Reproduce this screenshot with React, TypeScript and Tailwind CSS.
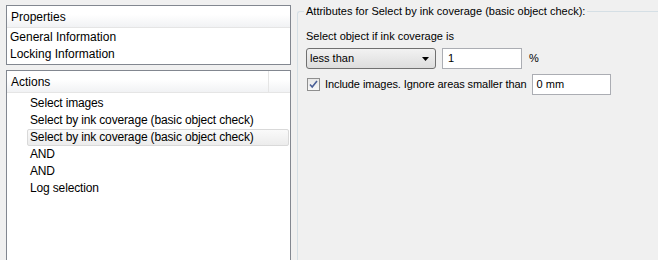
import React from "react";

const font = { fontFamily: '"Liberation Sans", Arial, sans-serif' };

function PanelHeader({ title, sep }: { title: string; sep?: boolean }) {
  return (
    <div className="relative h-[22px] flex items-center pl-[4px] bg-gradient-to-b from-white from-40% to-[#f1f2f4] border-b border-[#e5e5e5] text-[12px] text-black">
      {title}
      {sep && <div className="absolute left-[261px] top-0 h-full w-px bg-[#e5e5e5]" />}
    </div>
  );
}

export default function App() {
  const actions = [
    "Select images",
    "Select by ink coverage (basic object check)",
    "Select by ink coverage (basic object check)",
    "AND",
    "AND",
    "Log selection",
  ];
  return (
    <div className="w-[658px] h-[260px] bg-[#f0f0f0] overflow-hidden flex text-[12px] text-black" style={font}>
      <div className="w-[291px] pl-[6px] pt-[5px] flex flex-col gap-[5px] shrink-0">
        <div className="h-[60px] border border-[#828790] bg-white">
          <PanelHeader title="Properties" />
          <div className="pl-[3px] leading-[17px] pt-[1px]">
            <div>General Information</div>
            <div>Locking Information</div>
          </div>
        </div>
        <div className="flex-1 border border-[#828790] border-b-0 bg-white">
          <PanelHeader title="Actions" sep />
          <div className="pt-[2px] tracking-[-0.15px]">
            {actions.map((a, i) => (
              <div
                key={i}
                className={
                  "h-[17px] leading-[15px] pl-[2px] ml-[20px] mr-[1px] border rounded-[2px] " +
                  (i === 2
                    ? "border-[#d9d9d9] bg-gradient-to-b from-[#fafafa] to-[#ececec]"
                    : "border-transparent")
                }
              >
                {a}
              </div>
            ))}
          </div>
        </div>
      </div>
      <div className="flex-1 pl-[6px] pt-[11px] text-[11px]">
        <div className="relative h-[260px] border-l border-t border-[#d5dfe5] rounded-tl-[3px]">
          <div className="absolute -top-[8px] left-[6px] bg-[#f0f0f0] px-[2px] leading-[15px]">
            Attributes for Select by ink coverage (basic object check):
          </div>
          <div className="pl-[8px] pt-[17px]">
            <div className="leading-[15px]">Select object if ink coverage is</div>
            <div className="flex items-center mt-[4px] gap-[6px]">
              <div className="w-[130px] h-[21px] border border-[#707070] rounded-[3px] bg-gradient-to-b from-[#f2f2f2] to-[#dddddd] flex items-center pl-[3px] pr-[6px] justify-between">
                <span>less than</span>
                <svg width="7" height="4" viewBox="0 0 7 4"><path d="M0 0h7L3.5 4z" fill="#000" /></svg>
              </div>
              <div className="w-[80px] h-[21px] border border-[#abadb3] bg-white flex items-center pl-[5px]">1</div>
              <span className="ml-[1px]">%</span>
            </div>
            <div className="flex items-center mt-[5px]">
              <div className="w-[13px] h-[13px] border border-[#8f8f8f] bg-gradient-to-b from-[#e8e8e8] to-[#f8f8f8] flex items-center justify-center ml-[1px]">
                <svg width="9" height="9" viewBox="0 0 9 9"><path d="M1 4.5l2.2 2.5L8 1" fill="none" stroke="#4a5f97" strokeWidth="1.6" /></svg>
              </div>
              <span className="ml-[5px] tracking-[-0.08px]">Include images. Ignore areas smaller than</span>
              <div className="ml-[5px] w-[79px] h-[21px] border border-[#abadb3] bg-white flex items-center pl-[4px]">0 mm</div>
            </div>
          </div>
        </div>
      </div>
    </div>
  );
}
